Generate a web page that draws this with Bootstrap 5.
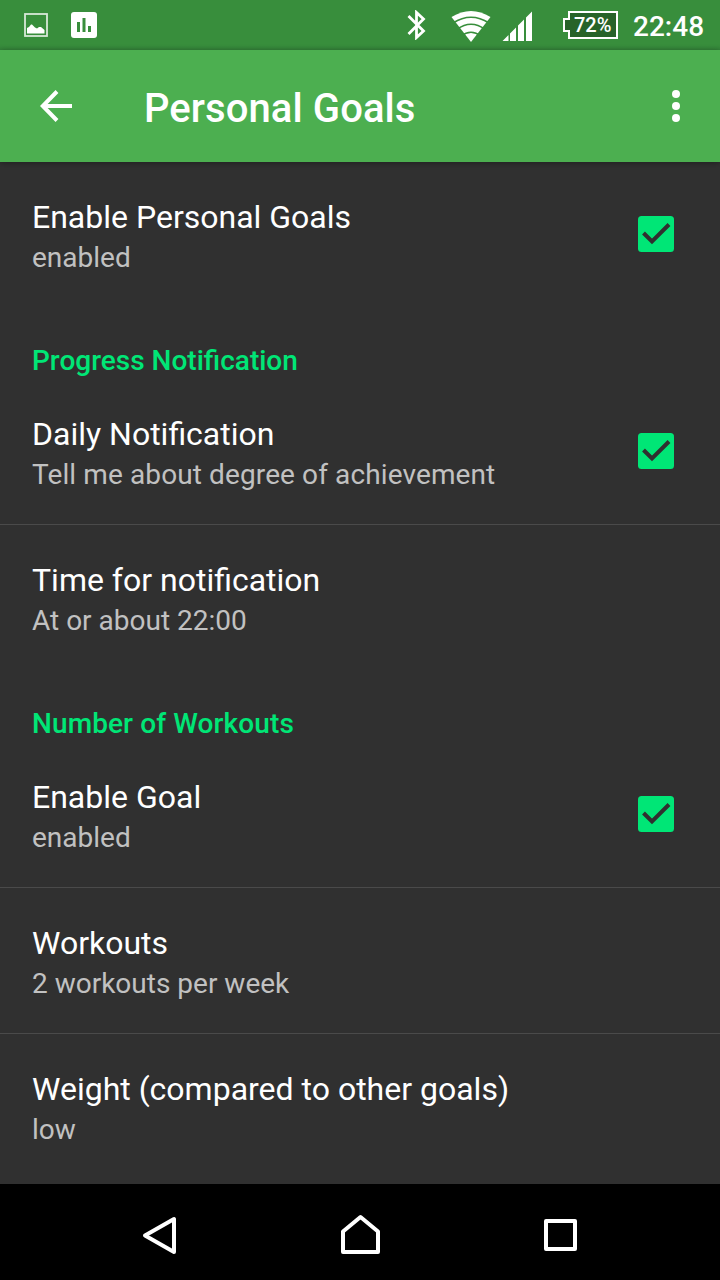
<!DOCTYPE html>
<html lang="en" data-bs-theme="dark">
<head>
<meta charset="utf-8">
<meta name="viewport" content="width=device-width, initial-scale=1">
<title>Personal Goals</title>
<link href="https://cdn.jsdelivr.net/npm/bootstrap@5.3.0/dist/css/bootstrap.min.css" rel="stylesheet">
<style>
body { font-family: Roboto, "Noto Sans", sans-serif; background: #303030; color: #fff; }
svg { display: block; flex: none; }
.screen { width: 720px; height: 1280px; }
.status-bar { height: 50px; background: linear-gradient(#388e3c 45px, #34843a 50px); }
.battery { width: 56px; height: 30px; margin-left: 28px; }
.battery-level { font-size: 20px; line-height: 28px; font-weight: 500; left: 11px; top: 1px; }
.clock { font-size: 28px; line-height: 34px; font-weight: 500; width: 71px; padding-top: 3px; margin: 0 16px 0 14px; }
.icon-photo { margin-left: 24px; }
.icon-chart { margin-left: 23px; }
.icon-signal { margin-left: 24px; }
.app-bar { height: 112px; padding: 0 40px; background: #4caf50; box-shadow: 0 1px 6px rgba(0,0,0,.35); z-index: 1; }
.app-title { font-size: 40px; line-height: 48px; font-weight: 500; letter-spacing: .08px; margin: 0 0 0 72px; padding-top: 6px; }
.pref { height: 145px; padding: 34px 46px 30px 32px; }
.pref-divided { border-top: 1px solid #4a4a4a; height: 146px; }
.pref-title { font-size: 32px; line-height: 43px; }
.pref-summary { font-size: 28px; line-height: 38px; color: #c1c1c1; }
.pref-check { margin-bottom: 6px; }
.section-title { font-size: 28px; line-height: 38px; height: 72px; padding: 35px 32px 0; font-weight: 500; color: #00e676; }
.loose { letter-spacing: .11px; }
.nav-keys { height: 96px; background: #000; }
</style>
</head>
<body>
<svg width="0" height="0" class="position-absolute" aria-hidden="true">
  <symbol id="checked" viewBox="0 0 36 36">
    <rect width="36" height="36" rx="3.500" fill="#00e676"/>
    <path d="M5.500 17l8.500 8.500L31 8.500" fill="none" stroke="#303030" stroke-width="4"/>
  </symbol>
</svg>
<div class="screen d-flex flex-column overflow-hidden">
  <header class="status-bar d-flex align-items-center flex-shrink-0">
    <svg class="icon-photo" width="24" height="24" viewBox="24 13 24 24">
      <rect x="25" y="14" width="22" height="22" fill="none" stroke="#d7e8d8" stroke-width="1.800"/>
      <path d="M27 33.500V28l2-1 2-2.500h1l3 3 2 1 2-1.500h2l3.500 3v3.500z" fill="#fff"/>
    </svg>
    <svg class="icon-chart" width="26" height="26" viewBox="0 0 26 26">
      <rect width="26" height="26" rx="3" fill="#fff"/>
      <path d="M6 10h3v10H6zM11.500 6h3v14h-3zM17 14h3v6h-3z" fill="#388e3c"/>
    </svg>
    <svg class="ms-auto" width="20" height="30" viewBox="407 10 20 30">
      <path d="M408.500 16L423.500 31 416.500 37.500V12.500L423.500 19 408.500 34" fill="none" stroke="#fff" stroke-width="2.800"/>
    </svg>
    <svg class="icon-signal" width="84" height="34" viewBox="451 8 84 34">
      <path d="M451.500 17Q471 5 490.500 17L471 42z" fill="#fff"/>
      <g fill="none" stroke="#388e3c" stroke-width="1.700"><path d="M453 23Q471 11.500 489 23M457 29.500Q471 19 485 29.500M461 36Q471 28.500 481 36"/></g>
      <path d="M502.500 41l6-6v6zM510 41v-7.500l6-6V41zM518 41V25.500l6-6V41zM526 41V17.500l6-6V41z" fill="#fff"/>
    </svg>
    <div class="battery position-relative">
      <svg width="56" height="30" viewBox="0 0 56 30"><path d="M6 2h48v26H6v-7H1V9h5z" fill="#276329" stroke="#fff" stroke-width="2"/></svg>
      <span class="battery-level position-absolute">72%</span>
    </div>
    <div class="clock text-end">22:48</div>
  </header>
  <nav class="app-bar d-flex align-items-center position-relative flex-shrink-0">
    <svg width="32" height="32" viewBox="0 0 32 32"><path d="M32 16H3M17 1.500L2.800 16 17 30.500" fill="none" stroke="#fff" stroke-width="4"/></svg>
    <h1 class="app-title">Personal Goals</h1>
    <svg class="ms-auto" width="8" height="32" viewBox="0 0 8 32" fill="#fff"><circle cx="4" cy="4" r="4"/><circle cx="4" cy="16" r="4"/><circle cx="4" cy="28" r="4"/></svg>
  </nav>
  <main class="flex-grow-1 overflow-hidden">
    <div class="pref d-flex align-items-center justify-content-between">
      <div><div class="pref-title">Enable Personal Goals</div><div class="pref-summary">enabled</div></div>
      <svg class="pref-check" width="36" height="36"><use href="#checked"/></svg>
    </div>
    <h2 class="section-title mb-0">Progress Notification</h2>
    <div class="pref d-flex align-items-center justify-content-between">
      <div><div class="pref-title">Daily Notification</div><div class="pref-summary loose">Tell me about degree of achievement</div></div>
      <svg class="pref-check" width="36" height="36"><use href="#checked"/></svg>
    </div>
    <div class="pref pref-divided">
      <div class="pref-title">Time for notification</div><div class="pref-summary">At or about 22:00</div>
    </div>
    <h2 class="section-title loose mb-0">Number of Workouts</h2>
    <div class="pref d-flex align-items-center justify-content-between">
      <div><div class="pref-title">Enable Goal</div><div class="pref-summary">enabled</div></div>
      <svg class="pref-check" width="36" height="36"><use href="#checked"/></svg>
    </div>
    <div class="pref pref-divided">
      <div class="pref-title">Workouts</div><div class="pref-summary">2 workouts per week</div>
    </div>
    <div class="pref pref-divided">
      <div class="pref-title">Weight (compared to other goals)</div><div class="pref-summary">low</div>
    </div>
  </main>
  <footer class="nav-keys flex-shrink-0 d-flex">
    <svg width="720" height="96" viewBox="0 1184 720 96" fill="none" stroke="#fff" stroke-width="4" stroke-linejoin="round">
      <path d="M174 1219v33l-29-16.500z"/>
      <path d="M343 1252v-20.500l17.500-14.500 17.500 14.500V1252z"/>
      <path d="M546 1221h29v28h-29z"/>
    </svg>
  </footer>
</div>
<script src="https://cdn.jsdelivr.net/npm/bootstrap@5.3.0/dist/js/bootstrap.bundle.min.js"></script>
</body>
</html>
